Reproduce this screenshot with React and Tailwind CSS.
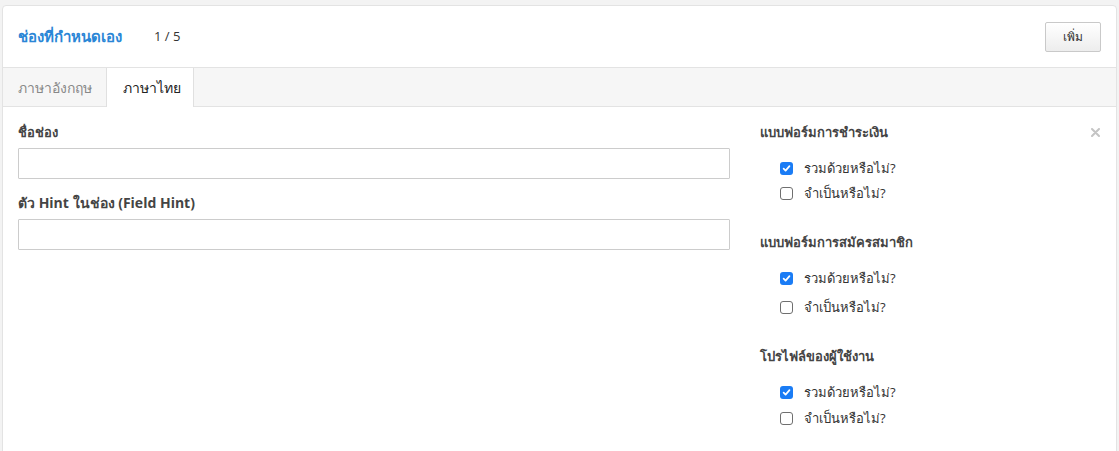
import { useState } from "react";

const font = { fontFamily: '"Open Sans", "Noto Sans", "DejaVu Sans", sans-serif' };

function Check({ checked, label }) {
  return (
    <label className="flex items-center gap-[11px] text-[13px] leading-[18px] h-[18px] text-[#333] cursor-pointer">
      {checked ? (
        <span className="w-[13px] h-[13px] rounded-[3px] bg-[#1a7cf5] flex items-center justify-center">
          <svg width="9" height="9" viewBox="0 0 10 10">
            <path d="M1.8 5.2 L4 7.4 L8.3 2.4" fill="none" stroke="#fff" strokeWidth="1.9" strokeLinecap="round" strokeLinejoin="round" />
          </svg>
        </span>
      ) : (
        <span className="w-[13px] h-[13px] rounded-[3px] border border-[#6f6f6f] bg-white" />
      )}
      <span>{label}</span>
    </label>
  );
}

function Group({ title, rows, gap }) {
  return (
    <div>
      <div className="text-[13px] font-bold text-[#444] leading-[18px] h-[18px]">{title}</div>
      <div className={`flex flex-col pl-5 mt-[18px] ${gap}`}>
        {rows.map((r, i) => (
          <Check key={i} checked={r.checked} label={r.label} />
        ))}
      </div>
    </div>
  );
}

export default function App() {
  const [tab, setTab] = useState("th");

  return (
    <div className="min-h-screen bg-[#f3f3f3] pt-[5px] pl-[2px] pr-[2px]" style={font}>
      <div className="bg-white border border-[#e3e3e3] rounded-t-[4px] h-[460px]">
        {/* header */}
        <div className="flex items-center h-[61px] pl-[15px] pr-[15px]">
          <span className="text-[15px] font-semibold text-[#2a86d6]">ช่องที่กำหนดเอง</span>
          <span className="ml-[32px] text-[13px] text-[#333]">1 / 5</span>
          <button className="ml-auto h-[30px] px-[17px] text-[12px] text-[#333] border border-[#c9c9c9] rounded-[2px] bg-gradient-to-b from-white to-[#ededed]">
            เพิ่ม
          </button>
        </div>

        {/* tabs */}
        <div className="flex h-[40px] bg-[#f6f6f6] border-t border-b border-[#e3e3e3]">
          <button
            onClick={() => setTab("en")}
            className={`pl-[15px] pr-[14px] text-[14px] ${tab === "en" ? "bg-white text-[#222] font-medium -mb-px border-r border-[#e0e0e0]" : "text-[#888]"}`}
          >
            ภาษาอังกฤษ
          </button>
          <button
            onClick={() => setTab("th")}
            className={`pl-[16px] pr-[12px] text-[14px] border-l border-r border-[#e0e0e0] ${tab === "th" ? "bg-white text-[#222] font-medium -mb-px" : "text-[#888]"}`}
          >
            ภาษาไทย
          </button>
        </div>

        {/* body */}
        <div className="flex pl-[15px] pr-[15px] pt-[16px]">
          <div className="w-[712px] flex flex-col">
            <label className="text-[13px] font-bold text-[#444] leading-[18px]">ชื่อช่อง</label>
            <input className="mt-[7px] h-[31px] border border-[#cccccc] rounded-[1px] px-2 text-[13px] outline-none" />
            <label className="mt-[15px] text-[14px] font-bold text-[#444] leading-[18px]">ตัว Hint ในช่อง (Field Hint)</label>
            <input className="mt-[7px] h-[31px] border border-[#cccccc] rounded-[1px] px-2 text-[13px] outline-none" />
          </div>

          <div className="ml-[30px] flex-1 flex flex-col relative">
            <svg className="absolute right-[1px] top-[5px]" width="9" height="9" viewBox="0 0 9 9">
              <path d="M1 1 L8 8 M8 1 L1 8" stroke="#c4c4c4" strokeWidth="2" strokeLinecap="round" />
            </svg>
            <Group
              title="แบบฟอร์มการชำระเงิน"
              gap="gap-[7px]"
              rows={[
                { checked: true, label: "รวมด้วยหรือไม่?" },
                { checked: false, label: "จำเป็นหรือไม่?" },
              ]}
            />
            <div className="mt-[31px]">
              <Group
                title="แบบฟอร์มการสมัครสมาชิก"
                gap="gap-[11px]"
                rows={[
                  { checked: true, label: "รวมด้วยหรือไม่?" },
                  { checked: false, label: "จำเป็นหรือไม่?" },
                ]}
              />
            </div>
            <div className="mt-[31px]">
              <Group
                title="โปรไฟล์ของผู้ใช้งาน"
                gap="gap-[8px]"
                rows={[
                  { checked: true, label: "รวมด้วยหรือไม่?" },
                  { checked: false, label: "จำเป็นหรือไม่?" },
                ]}
              />
            </div>
          </div>
        </div>
      </div>
    </div>
  );
}
